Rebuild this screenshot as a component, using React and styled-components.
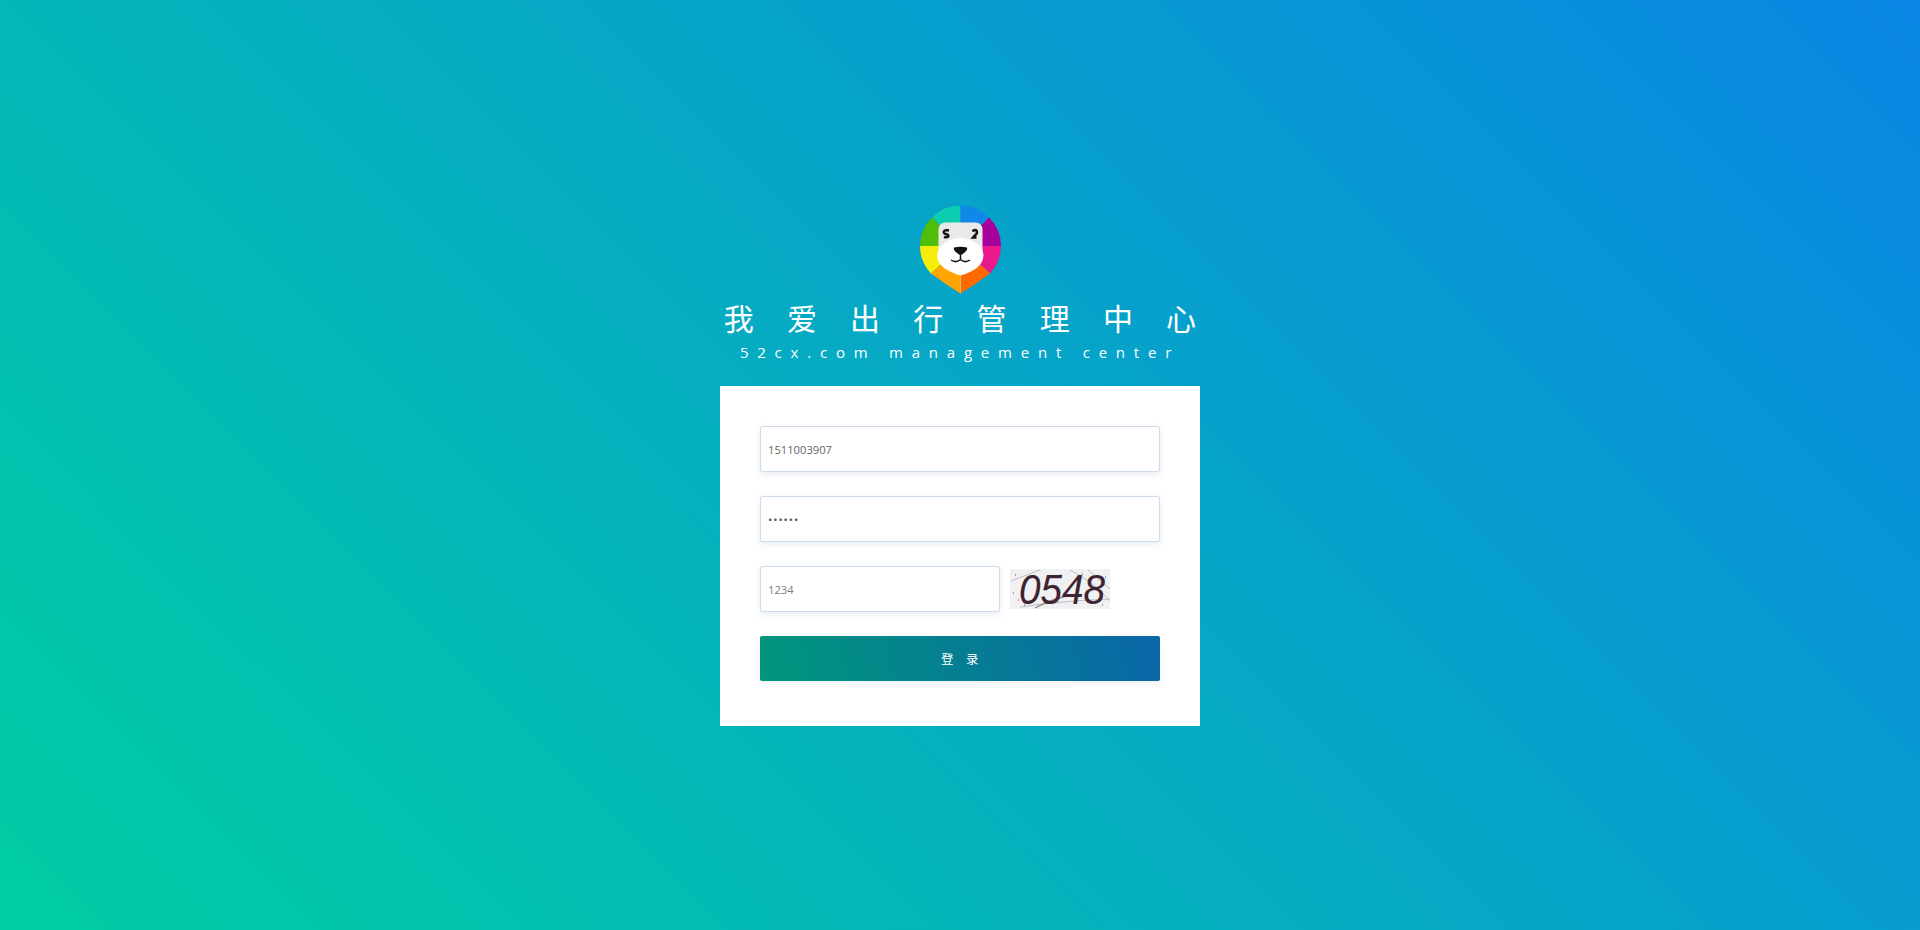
import styled, { createGlobalStyle } from 'styled-components'

const Reset = createGlobalStyle`
  html, body { margin: 0; padding: 0; }
  body { font-family: "Open Sans", "Noto Sans CJK SC", sans-serif; }
`

const Page = styled.div`
  height: 930px;
  overflow: hidden;
  padding-top: 205px;
  box-sizing: border-box;
  display: flex;
  flex-direction: column;
  align-items: center;
  background: linear-gradient(45deg, #00cea3 0%, #0a85e4 100%);
`

const Head = styled.div`
  display: flex;
  flex-direction: column;
  align-items: center;
  color: #fff;
`

const Mark = styled.svg`
  display: block;
  width: 81px;
  height: 89px;
  margin-left: 1px;
`

const Title = styled.h1`
  margin: 3px 0 0;
  height: 40px;
  text-align: center;
  white-space: nowrap;
  font: 400 30px/40px "Noto Sans CJK SC", sans-serif;
  letter-spacing: 33.2px;
  padding-left: 33px;
`

const Subtitle = styled.p`
  margin: 3px 0 0;
  height: 24px;
  text-align: center;
  white-space: nowrap;
  font: 400 15px/24px "Open Sans", sans-serif;
  letter-spacing: 8.78px;
`

const Card = styled.form`
  margin-top: 22px;
  width: 480px;
  height: 340px;
  box-sizing: border-box;
  padding: 40px;
  background: #fff;
  display: flex;
  flex-direction: column;
  gap: 24px;
`

const Field = styled.input`
  width: ${p => p.$short ? '240px' : '100%'};
  height: 46px;
  box-sizing: border-box;
  padding: 0 7px;
  border: 1px solid #cddbea;
  border-radius: 2px;
  outline: none;
  background: #fff;
  box-shadow: 0 2px 6px rgba(120, 150, 190, 0.18);
  color: ${p => p.$muted ? '#7c7c7c' : '#666'};
  font: 400 11.2px "Open Sans", sans-serif;

  &[type='password'] {
    letter-spacing: 1px;
    color: #555;
  }
`

const CaptchaRow = styled.div`
  display: flex;
  align-items: center;
  gap: 10px;
`

const Submit = styled.button`
  height: 45px;
  border: 0;
  border-radius: 2px;
  background: linear-gradient(75deg, #00967c 0%, #0a66a8 100%);
  box-shadow: 0 2px 6px rgba(120, 150, 190, 0.14);
  color: #fff;
  font: 400 12.5px "Noto Sans CJK SC", sans-serif;
  letter-spacing: 12.5px;
  text-indent: 12px;
  cursor: pointer;
`

const CaptchaBox = styled.svg`
  display: block;
  width: 100px;
  height: 40px;
  flex: none;
`

function BearLogo() {
  return (
    <Mark viewBox="0 0 81 89">
      <path d="M40.5 41 L40.5 0.5 A40.5 40.5 0 0 0 12 12.5 Z" fill="#0dcdb0" />
      <path d="M40.5 41 L40.5 0.5 A40.5 40.5 0 0 1 69 12.5 Z" fill="#1188e8" />
      <path d="M40.5 41 L69 12.5 A40.5 40.5 0 0 1 81 41 Z" fill="#a8009c" />
      <path d="M40.5 41 L81 41 A40.5 40.5 0 0 1 70 68.5 Z" fill="#ea1a8c" />
      <path d="M40.5 41 L70 68.5 Q56 79 40.5 88.5 Z" fill="#ff6a00" />
      <path d="M40.5 41 L11 68.5 Q25 79 40.5 88.5 Z" fill="#ffa400" />
      <path d="M40.5 41 L0 41 A40.5 40.5 0 0 0 11 68.5 Z" fill="#f4ee0a" />
      <path d="M40.5 41 L12 12.5 A40.5 40.5 0 0 0 0 41 Z" fill="#50bd0b" />
      <path d="M26 17.5 H55 Q62.5 17.5 62.5 25 V46 H18.5 V25 Q18.5 17.5 26 17.5 Z" fill="#e9e9e9" />
      <path d="M30 35 Q40.5 31 51 35 Q63 41 63.5 50 Q63.5 60 52 66 Q46 69 40.5 70.5 Q35 69 29 66 Q17 60 17 50 Q17.5 41 30 35 Z" fill="#fff" />
      <path d="M29 25.5 Q24 24.5 23.8 27 Q23.8 28.8 26.5 29.3 Q29 30 28.3 31.5 Q26.5 33 24 31.8" stroke="#16120f" strokeWidth="2.5" fill="none" />
      <path d="M52.5 26.5 Q54 24.5 56 25.2 Q57.8 27 56.2 29.3 Q54.2 31 53 32.5 H56.5" stroke="#16120f" strokeWidth="2.5" fill="none" />
      <path d="M34 42.5 Q40.5 41 47 42.5 Q48 45 44 48 Q42 50 40.5 50 Q39 50 37 48 Q33 45 34 42.5 Z" fill="#16120f" />
      <path d="M40.5 50 V54.5 M31 55 Q36 58.5 40.5 54.5 Q45 58.5 50 55" stroke="#16120f" strokeWidth="1.5" fill="none" />
      <path d="M40.5 69 V88.5" stroke="#e8d8a0" strokeWidth="0.6" />
    </Mark>
  )
}

function Captcha() {
  return (
    <CaptchaBox viewBox="0 0 100 40">
      <rect width="100" height="40" fill="#f1f1f4" />
      <path d="M1 12 L30 1 M60 1 Q85 14 100 32 M78 1 L100 20 M10 38 Q50 32 100 30" stroke="#bdbdc2" strokeWidth="1" fill="none" />
      <path d="M25 39 Q45 28 68 25" stroke="#85858a" strokeWidth="1.4" fill="none" />
      <path d="M3 24 l1 0 M8 31 l1 0 M14 36 l1 0 M95 8 l1 0 M92 36 l1 0 M50 6 l1 0 M72 5 l1 0 M5 6 l1 0" stroke="#555" strokeWidth="1" />
      <text x="9" y="35" fontFamily="Liberation Sans, sans-serif" fontStyle="italic" fontSize="43" fill="#3d2430" stroke="#3d2430" strokeWidth="0.15" textLength="86" lengthAdjust="spacingAndGlyphs">0548</text>
    </CaptchaBox>
  )
}

export default function App() {
  return (
    <>
      <Reset />
      <Page>
        <Head>
          <BearLogo />
          <Title>我爱出行管理中心</Title>
          <Subtitle>52cx.com management center</Subtitle>
        </Head>
        <Card onSubmit={e => e.preventDefault()}>
          <Field type="text" defaultValue="1511003907" />
          <Field type="password" defaultValue="123456" />
          <CaptchaRow>
            <Field $short $muted type="text" defaultValue="1234" />
            <Captcha />
          </CaptchaRow>
          <Submit type="submit">登录</Submit>
        </Card>
      </Page>
    </>
  )
}
